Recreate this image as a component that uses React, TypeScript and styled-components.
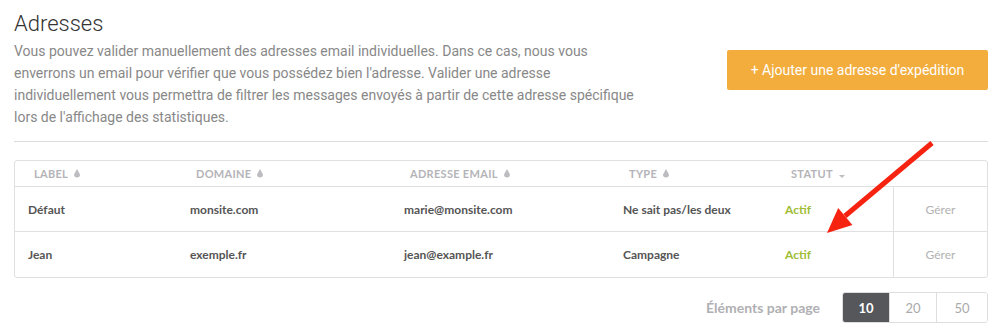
import styled, { createGlobalStyle } from 'styled-components';

const GlobalStyle = createGlobalStyle`
  * { box-sizing: border-box; }
  body {
    margin: 0;
    background: #fff;
    font-family: Roboto, "Liberation Sans", sans-serif;
  }
`;

const Page = styled.div`
  position: relative;
  width: 1000px;
  height: 335px;
  padding: 8px 12px 0 14px;
  overflow: hidden;
`;

const Header = styled.header`
  display: flex;
  justify-content: space-between;
  align-items: center;
`;

const Intro = styled.div`
  width: 660px;
`;

const Title = styled.h2`
  margin: 0;
  font-size: 22px;
  line-height: 32px;
  font-weight: 300;
  color: #333;
`;

const Description = styled.p`
  margin: 0;
  font-size: 14px;
  line-height: 22px;
  color: #888;
`;

const AddButton = styled.button`
  width: 261px;
  height: 40px;
  margin-top: 4px;
  border: none;
  border-radius: 2px;
  background: #f2ad3d;
  color: #fff;
  font-family: Roboto, "Liberation Sans", sans-serif;
  font-size: 14px;
  cursor: pointer;
`;

const Divider = styled.hr`
  margin: 13px 0 0;
  border: none;
  border-top: 1px solid #dcdcdc;
`;

const Table = styled.div`
  margin-top: 18px;
  border: 1px solid #e0e0e2;
  border-radius: 3px;
  font-family: Lato, "Open Sans", sans-serif;
`;

const cols = '162px 214px 219px 162px 121px 1fr';

const HeadRow = styled.div`
  display: grid;
  grid-template-columns: ${cols};
  height: 26px;
  align-items: center;
  border-bottom: 1px solid #e0e0e2;
`;

const HeadCell = styled.div`
  display: flex;
  align-items: center;
  gap: 6px;
  padding-left: 19px;
  font-size: 11px;
  font-weight: 700;
  letter-spacing: 0.3px;
  color: #b4b4b8;
  text-transform: uppercase;
`;

const Row = styled.div<{ $last?: boolean }>`
  display: grid;
  grid-template-columns: ${cols};
  height: 45px;
  border-bottom: ${(p) => (p.$last ? 'none' : '1px solid #e0e0e2')};
`;

const Cell = styled.div<{ $tone?: 'default' | 'ok' }>`
  display: flex;
  align-items: center;
  padding-left: 13px;
  font-size: 12px;
  font-weight: 700;
  color: ${(p) => (p.$tone === 'ok' ? '#9fbd33' : '#555')};
`;

const ActionCell = styled.div`
  display: flex;
  align-items: center;
  justify-content: center;
  border-left: 1px solid #e0e0e2;
  font-size: 12px;
  color: #b2b2b2;
`;

const Pager = styled.div`
  display: flex;
  justify-content: flex-end;
  align-items: center;
  gap: 22px;
  margin-top: 14px;
  font-family: Lato, "Open Sans", sans-serif;
`;

const PagerLabel = styled.span`
  font-size: 14px;
  font-weight: 700;
  color: #b0b0b4;
`;

const PagerGroup = styled.div`
  display: flex;
  border: 1px solid #dedee0;
  border-radius: 3px;
  overflow: hidden;
`;

const PageSize = styled.button<{ $active?: boolean; $w: number }>`
  width: ${(p) => p.$w}px;
  height: 29px;
  border: none;
  border-left: 1px solid #dedee0;
  &:first-child { border-left: none; }
  background: ${(p) => (p.$active ? '#55575b' : '#fff')};
  color: ${(p) => (p.$active ? '#fff' : '#aaa')};
  font-family: Lato, "Open Sans", sans-serif;
  font-size: 13px;
  font-weight: ${(p) => (p.$active ? 700 : 400)};
`;

const Overlay = styled.svg`
  position: absolute;
  top: 0;
  left: 0;
  pointer-events: none;
`;

const SortIcon = () => (
  <svg width="6" height="10" viewBox="0 0 6 10">
    <path d="M3 0 L6 5.5 A3 3 0 0 1 0 5.5 Z" fill="#bdbdc1" />
  </svg>
);

const CaretIcon = () => (
  <svg width="6" height="10" viewBox="0 0 6 10">
    <path d="M0 6 L6 6 L3 9 Z" fill="#bdbdc1" />
  </svg>
);

const rows = [
  { label: 'Défaut', domain: 'monsite.com', email: 'marie@monsite.com', type: 'Ne sait pas/les deux' },
  { label: 'Jean', domain: 'exemple.fr', email: 'jean@example.fr', type: 'Campagne' },
];

export default function App() {
  return (
    <>
      <GlobalStyle />
      <Page>
        <Header>
          <Intro>
            <Title>Adresses</Title>
            <Description>
              Vous pouvez valider manuellement des adresses email individuelles. Dans ce cas, nous vous
              <br />
              enverrons un email pour vérifier que vous possédez bien l'adresse. Valider une adresse
              <br />
              individuellement vous permettra de filtrer les messages envoyés à partir de cette adresse spécifique
              <br />
              lors de l'affichage des statistiques.
            </Description>
          </Intro>
          <AddButton>+ Ajouter une adresse d'expédition</AddButton>
        </Header>
        <Divider />

        <Table>
          <HeadRow>
            <HeadCell>Label <SortIcon /></HeadCell>
            <HeadCell>Domaine <SortIcon /></HeadCell>
            <HeadCell>Adresse email <SortIcon /></HeadCell>
            <HeadCell>Type <SortIcon /></HeadCell>
            <HeadCell>Statut <CaretIcon /></HeadCell>
            <div />
          </HeadRow>
          {rows.map((r, i) => (
            <Row key={r.label} $last={i === rows.length - 1}>
              <Cell>{r.label}</Cell>
              <Cell>{r.domain}</Cell>
              <Cell>{r.email}</Cell>
              <Cell>{r.type}</Cell>
              <Cell $tone="ok">Actif</Cell>
              <ActionCell>Gérer</ActionCell>
            </Row>
          ))}
        </Table>

        <Pager>
          <PagerLabel>Éléments par page</PagerLabel>
          <PagerGroup>
            <PageSize $active $w={46}>10</PageSize>
            <PageSize $w={47}>20</PageSize>
            <PageSize $w={51}>50</PageSize>
          </PagerGroup>
        </Pager>

        <Overlay width="1000" height="335" viewBox="0 0 1000 335">
          <line x1="932" y1="143" x2="845" y2="216" stroke="#f5230f" strokeWidth="5" />
          <path d="M827 233 L852.4 224.9 L838.2 208.1 Z" fill="#f5230f" />
        </Overlay>
      </Page>
    </>
  );
}
